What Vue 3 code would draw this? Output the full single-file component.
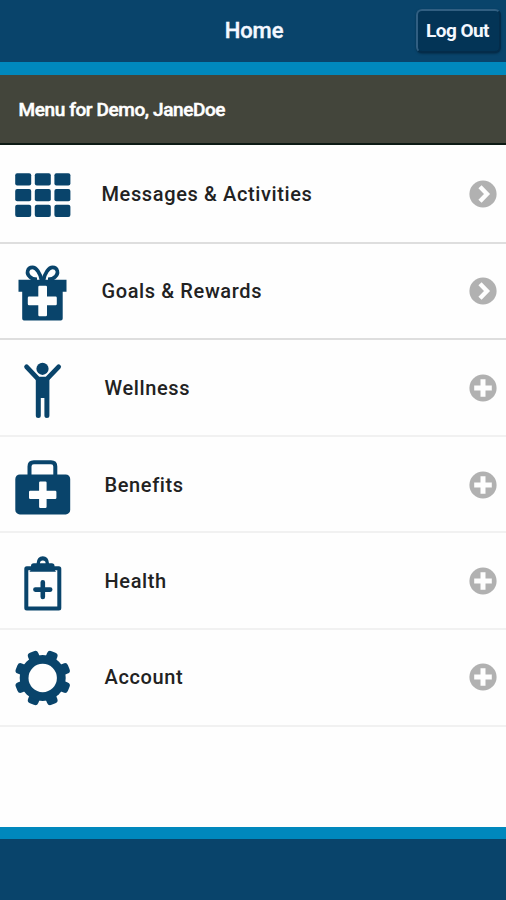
<template>
  <div class="app">
    <header class="header">
      <h1 class="title">Home</h1>
      <button class="logout">Log Out</button>
    </header>
    <div class="user">Menu for {{ user }}</div>
    <ul class="menu">
      <li v-for="item in items" :key="item.icon" class="item">
        <svg class="icon" viewBox="0 0 60 60">
          <g v-if="item.icon === 'grid'">
            <template v-for="y in [9.2, 25, 40.8]" :key="y">
              <rect v-for="x in [3.2, 22.8, 42.4]" :key="x" :x="x" :y="y" width="16" height="12.2" rx="2" />
            </template>
          </g>
          <g v-else-if="item.icon === 'gift'">
            <path d="M6.5 18.8H54.5V30.8H50.7V57.5Q50.7 59.4 48.8 59.4H12Q10.2 59.4 10.2 57.5V30.8H6.5Z" />
            <path class="bow" d="M29.5 19.5C28.5 12 24 6.4 20.5 6.4C15 6.4 14.2 12.5 17.5 15.5Q20 18.4 25 18.4M31.5 19.5C32.5 12 37 6.4 40.5 6.4C46 6.4 46.8 12.5 43.5 15.5Q41 18.4 36 18.4" />
            <path class="hole" d="M27.5 24.8H33.8Q35 24.8 35 26V35.6H43.6Q44.8 35.6 44.8 36.8V43Q44.8 44.2 43.6 44.2H35V54Q35 55.2 33.8 55.2H27.5Q26.3 55.2 26.3 54V44.2H17Q15.8 44.2 15.8 43V36.8Q15.8 35.6 17 35.6H26.3V26Q26.3 24.8 27.5 24.8Z" />
          </g>
          <g v-else-if="item.icon === 'person'">
            <circle cx="30.5" cy="10.8" r="6.1" />
            <path class="arms" d="M14.6 8.8L26.2 21.2H34.8L46.6 8.8" />
            <path d="M23.8 19.5H37.4V57.4A2.5 2.5 0 0 1 32.4 57.4V40H28.8V57.4A2.5 2.5 0 0 1 23.8 57.4Z" />
          </g>
          <g v-else-if="item.icon === 'case'">
            <path class="line" d="M17.5 20V11.5Q17.5 7.3 21.8 7.3H39Q43.3 7.3 43.3 11.5V20" />
            <rect x="3.3" y="19.4" width="54.9" height="40" rx="4.5" />
            <path class="hole" d="M28.3 26.4H33.4Q34.6 26.4 34.6 27.6V35.8H43.2Q44.4 35.8 44.4 37V42.8Q44.4 44 43.2 44H34.6V51.8Q34.6 53 33.4 53H28.3Q27.1 53 27.1 51.8V44H18.2Q17 44 17 42.8V37Q17 35.8 18.2 35.8H27.1V27.6Q27.1 26.4 28.3 26.4Z" />
          </g>
          <g v-else-if="item.icon === 'clipboard'">
            <rect class="line" x="14.3" y="17.3" width="33" height="40.3" rx="0.5" />
            <path d="M17.5 20.8Q19 19.5 19 17V14.8Q19 12.2 21.8 12.2H24.6Q25.2 5.2 30.8 5.2T37 12.2H39.8Q42.5 12.2 42.5 14.8V17Q42.5 19.5 44 20.8Z" />
            <path class="hole" d="M28 12.2A2.8 2.8 0 0 1 33.6 12.2Z" />
            <path class="cross" d="M30.8 31.2V46M23.4 38.6H38.2" />
          </g>
          <g v-else>
            <rect
              v-for="n in 8"
              :key="n"
              x="25.2"
              y="2.8"
              width="11"
              height="16"
              rx="3.4"
              :transform="`rotate(${n * 45 - 22.5} 30.7 31)`"
            />
            <circle cx="30.7" cy="31" r="23" />
            <circle class="hole" cx="30.7" cy="31" r="14.2" />
          </g>
        </svg>
        <span class="label" :class="{ inset: item.expandable }">{{ item.label }}</span>
        <svg class="action" viewBox="0 0 28 28">
          <circle cx="14" cy="14" r="13.6" />
          <path v-if="item.expandable" class="plus" d="M14 5.2V22.8M5.2 14H22.8" />
          <path v-else class="chevron" d="M11 6.8L18 14L11 21.2" />
        </svg>
      </li>
    </ul>
    <footer class="footer" />
  </div>
</template>

<script setup>
const user = "Demo, JaneDoe";

const items = [
  { icon: "grid", label: "Messages & Activities", expandable: false },
  { icon: "gift", label: "Goals & Rewards", expandable: false },
  { icon: "person", label: "Wellness", expandable: true },
  { icon: "case", label: "Benefits", expandable: true },
  { icon: "clipboard", label: "Health", expandable: true },
  { icon: "gear", label: "Account", expandable: true },
];
</script>

<style>
body {
  margin: 0;
}
</style>

<style scoped>
.app {
  height: 900px;
  display: flex;
  flex-direction: column;
  background-color: #fefefe;
  font-family: Roboto, sans-serif;
}

.header {
  box-sizing: border-box;
  height: 75px;
  padding: 9px 5px 0 0;
  display: grid;
  grid-template-columns: 1fr auto 1fr;
  align-items: start;
  background-color: #09446b;
  border-bottom: 13px solid #0088bd;
}

.title {
  grid-column: 2;
  margin: 0 0 0 7px;
  font-size: 22px;
  font-weight: 500;
  line-height: 44px;
  letter-spacing: -0.1px;
  color: #f4f8ff;
  -webkit-text-stroke: 0.4px #f4f8ff;
}

.logout {
  justify-self: end;
  box-sizing: border-box;
  width: 85px;
  height: 44px;
  padding: 0 2px 2px 0;
  border: 2px solid #08365a;
  border-top-color: #315f82;
  border-left-color: #315f82;
  border-right-color: #042c4a;
  border-bottom-color: #042c4a;
  border-radius: 6px;
  background-color: #033456;
  box-shadow: 0 1px 2px #06304e;
  font-family: inherit;
  font-size: 19px;
  font-weight: 700;
  letter-spacing: -0.55px;
  white-space: nowrap;
  color: #f4f8ff;
}

.user {
  box-sizing: border-box;
  height: 70px;
  padding-left: 18.5px;
  border-bottom: 2px solid #0c1a14;
  background-color: #43453b;
  font-size: 19px;
  font-weight: 500;
  line-height: 70px;
  letter-spacing: -0.4px;
  color: #fff;
  -webkit-text-stroke: 0.5px #fff;
}

.menu {
  flex: 1;
  margin: 0;
  padding: 2px 0 0;
  list-style: none;
}

.item {
  box-sizing: border-box;
  height: 96.6px;
  padding: 0 9px 0 12px;
  display: flex;
  align-items: center;
  border-bottom: 2px solid #f1f1f1;
}

.item:nth-child(-n + 2) {
  border-bottom-color: #dedede;
}

.item:nth-child(3),
.item:nth-child(4) {
  padding-top: 1px;
}

.icon {
  width: 60px;
  height: 60px;
  fill: #09446b;
}

.line,
.bow,
.arms,
.cross {
  fill: none;
  stroke: #09446b;
  stroke-width: 4;
}

.bow {
  stroke-width: 3.6;
}

.arms {
  stroke-width: 4.8;
  stroke-linecap: round;
}

.cross {
  stroke-width: 4.6;
  stroke-linecap: round;
}

.hole {
  fill: #fefefe;
}

.label {
  flex: 1;
  margin-left: 29.5px;
  font-size: 20px;
  font-weight: 500;
  letter-spacing: 0.62px;
  color: #222;
}

.label.inset {
  margin-left: 32.5px;
}

.action {
  width: 28px;
  height: 28px;
  fill: #b1b1b1;
}

.plus,
.chevron {
  fill: none;
  stroke: #fefefe;
  stroke-width: 5;
}

.chevron {
  stroke-width: 4.4;
}

.footer {
  height: 61px;
  border-top: 12px solid #0088bd;
  background-color: #09446b;
}
</style>
